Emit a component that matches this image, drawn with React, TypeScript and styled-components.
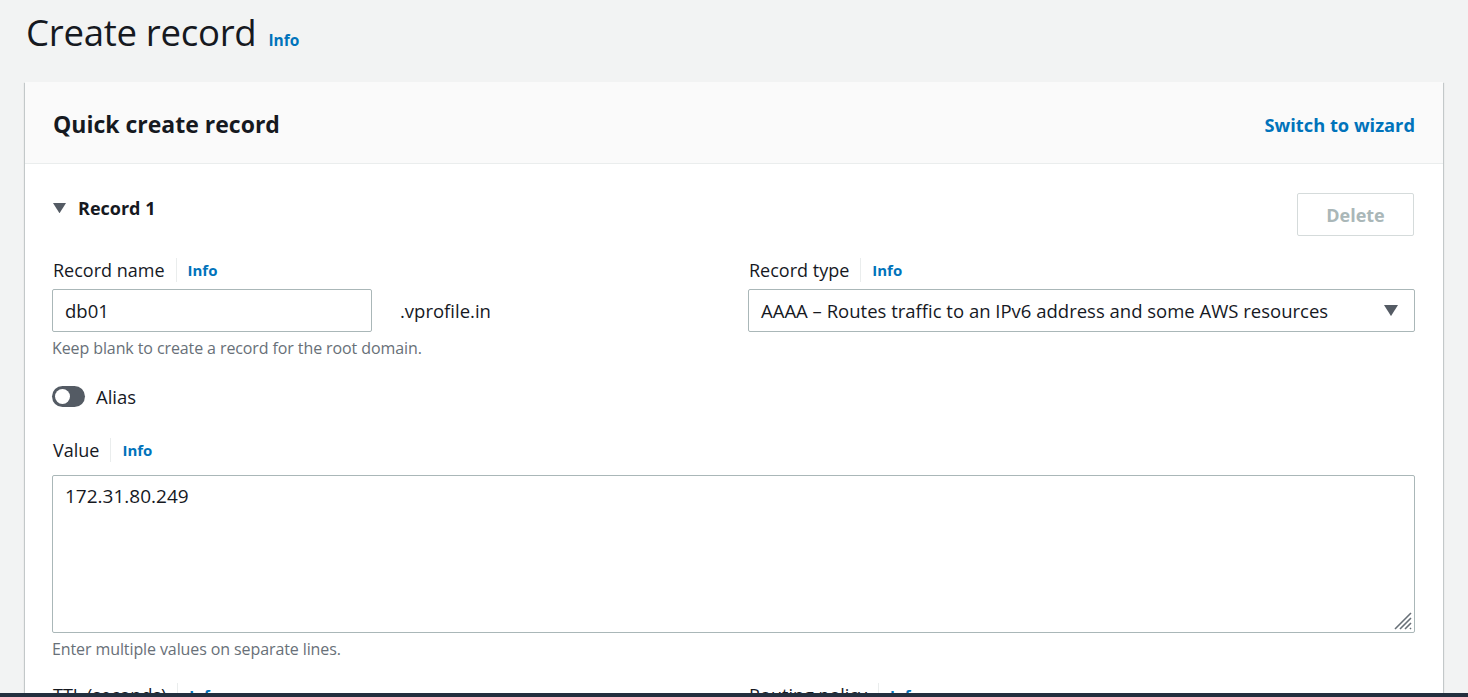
import React from "react";
import styled, { createGlobalStyle } from "styled-components";

const Global = createGlobalStyle`
  html, body { margin: 0; padding: 0; }
  body {
    background: #f2f3f3;
    font-family: "Open Sans", "Noto Sans", sans-serif;
    color: #16191f;
    overflow: hidden;
  }
`;

const Page = styled.div`
  padding: 0 25px;
  height: 697px;
  box-sizing: border-box;
`;

const TitleRow = styled.div`
  display: flex;
  align-items: baseline;
  gap: 12px;
  height: 82px;
  padding-left: 1px;
  padding-top: 10px;
  box-sizing: border-box;
`;

const Title = styled.h1`
  margin: 0;
  font-size: 36.6px;
  line-height: 44px;
  font-weight: 400;
  letter-spacing: -0.3px;
`;

const InfoLink = styled.a<{ $size?: number }>`
  color: #0073bb;
  font-weight: 700;
  font-size: ${(p) => p.$size ?? 15}px;
  text-decoration: none;
`;

const Card = styled.div`
  background: #fff;
  box-shadow: 0 1px 1px 0 rgba(0, 28, 36, 0.3), 1px 1px 1px 0 rgba(0, 28, 36, 0.15),
    -1px 1px 1px 0 rgba(0, 28, 36, 0.15);
`;

const CardHeader = styled.div`
  display: flex;
  align-items: center;
  justify-content: space-between;
  height: 82px;
  padding: 2px 28px 0;
  background: #fafafa;
  border-bottom: 1px solid #eaeded;
  box-sizing: border-box;
`;

const CardTitle = styled.h2`
  margin: 0;
  font-size: 23px;
  font-weight: 700;
`;

const HeaderLink = styled.a`
  color: #0073bb;
  font-weight: 700;
  font-size: 18.3px;
  text-decoration: none;
  padding-top: 2px;
`;

const CardBody = styled.div`
  padding: 29px 28px 0 27px;
`;

const RecordRow = styled.div`
  display: flex;
  align-items: flex-start;
  justify-content: space-between;
  height: 43px;
`;

const RecordToggle = styled.div`
  display: flex;
  align-items: center;
  gap: 12px;
  font-weight: 700;
  font-size: 18px;
  line-height: 30px;
  padding-left: 1px;
`;

const DeleteButton = styled.button`
  width: 117px;
  height: 43px;
  border: 1px solid #d5dbdb;
  border-radius: 2px;
  background: #fff;
  color: #aab7b8;
  font-family: inherit;
  font-weight: 700;
  font-size: 18px;
  margin-right: 1px;
`;

const Grid = styled.div<{ $mt?: number }>`
  display: grid;
  grid-template-columns: 1fr 1fr;
  column-gap: 29px;
  margin-top: ${(p) => p.$mt ?? 22}px;
`;

const Field = styled.div<{ $mt?: number }>`
  display: flex;
  flex-direction: column;
  margin-top: ${(p) => p.$mt ?? 0}px;
`;

const LabelRow = styled.div<{ $mb?: number }>`
  display: flex;
  align-items: center;
  height: 24px;
  margin-bottom: ${(p) => p.$mb ?? 7}px;
`;

const Label = styled.span`
  font-size: 18px;
  padding-right: 11px;
  border-right: 1px solid #eaeded;
  line-height: 24px;
  padding-left: 1px;
`;

const LabelInfo = styled(InfoLink)`
  padding-left: 11px;
`;

const InputRow = styled.div`
  display: flex;
  align-items: center;
  gap: 28px;
`;

const TextInput = styled.div<{ $w?: string }>`
  width: ${(p) => p.$w ?? "100%"};
  height: 43px;
  box-sizing: border-box;
  border: 1px solid #aab7b8;
  border-radius: 2px;
  padding: 0 12px;
  display: flex;
  align-items: center;
  font-size: 18.5px;
  background: #fff;
`;

const Suffix = styled.span`
  font-size: 18.5px;
`;

const Select = styled(TextInput)`
  justify-content: space-between;
  padding-right: 16px;
`;

const Hint = styled.div`
  margin-top: 6px;
  font-size: 16px;
  line-height: 20px;
  color: #687078;
  letter-spacing: -0.1px;
`;

const ToggleRow = styled.div`
  display: flex;
  align-items: center;
  gap: 11px;
  margin-top: 26px;
  height: 24px;
  font-size: 18.5px;
`;

const Switch = styled.span`
  position: relative;
  width: 33px;
  height: 21px;
  border-radius: 11px;
  background: #545b64;
  &::after {
    content: "";
    position: absolute;
    left: 3px;
    top: 3px;
    width: 15px;
    height: 15px;
    border-radius: 50%;
    background: #fff;
  }
`;

const TextArea = styled.div`
  position: relative;
  height: 158px;
  box-sizing: border-box;
  border: 1px solid #aab7b8;
  border-radius: 2px;
  padding: 8px 12px;
  font-size: 19px;
  line-height: 24px;
`;

const Grip = styled.svg`
  position: absolute;
  right: 2px;
  bottom: 2px;
`;

const BottomBar = styled.div`
  position: fixed;
  left: 0;
  right: 0;
  bottom: 0;
  height: 4px;
  background: #232f3e;
`;

const Tri = ({ size = 13 }: { size?: number }) => (
  <svg width={size} height={size * 0.8} viewBox="0 0 14 11">
    <path d="M0 0 H14 L7 11 Z" fill="#545b64" />
  </svg>
);

export default function App() {
  return (
    <>
      <Global />
      <Page>
        <TitleRow>
          <Title>Create record</Title>
          <InfoLink $size={15.5}>Info</InfoLink>
        </TitleRow>
        <Card>
          <CardHeader>
            <CardTitle>Quick create record</CardTitle>
            <HeaderLink>Switch to wizard</HeaderLink>
          </CardHeader>
          <CardBody>
            <RecordRow>
              <RecordToggle>
                <Tri />
                Record 1
              </RecordToggle>
              <DeleteButton>Delete</DeleteButton>
            </RecordRow>
            <Grid>
              <Field>
                <LabelRow>
                  <Label>Record name</Label>
                  <LabelInfo>Info</LabelInfo>
                </LabelRow>
                <InputRow>
                  <TextInput $w="320px">db01</TextInput>
                  <Suffix>.vprofile.in</Suffix>
                </InputRow>
                <Hint>Keep blank to create a record for the root domain.</Hint>
              </Field>
              <Field>
                <LabelRow>
                  <Label>Record type</Label>
                  <LabelInfo>Info</LabelInfo>
                </LabelRow>
                <Select>
                  AAAA – Routes traffic to an IPv6 address and some AWS resources
                  <Tri size={14} />
                </Select>
              </Field>
            </Grid>
            <ToggleRow>
              <Switch />
              Alias
            </ToggleRow>
            <Field $mt={30}>
              <LabelRow $mb={13}>
                <Label>Value</Label>
                <LabelInfo>Info</LabelInfo>
              </LabelRow>
              <TextArea>
                172.31.80.249
                <Grip width="22" height="22" viewBox="0 0 22 22">
                  <path d="M21 5 L5 21 M21 10 L10 21 M21 15 L15 21 M21 20 L20 21" stroke="#687078" strokeWidth="1.6" />
                </Grip>
              </TextArea>
              <Hint>Enter multiple values on separate lines.</Hint>
            </Field>
            <Grid $mt={24}>
              <LabelRow>
                <Label>TTL (seconds)</Label>
                <LabelInfo>Info</LabelInfo>
              </LabelRow>
              <LabelRow>
                <Label>Routing policy</Label>
                <LabelInfo>Info</LabelInfo>
              </LabelRow>
            </Grid>
          </CardBody>
        </Card>
      </Page>
      <BottomBar />
    </>
  );
}
